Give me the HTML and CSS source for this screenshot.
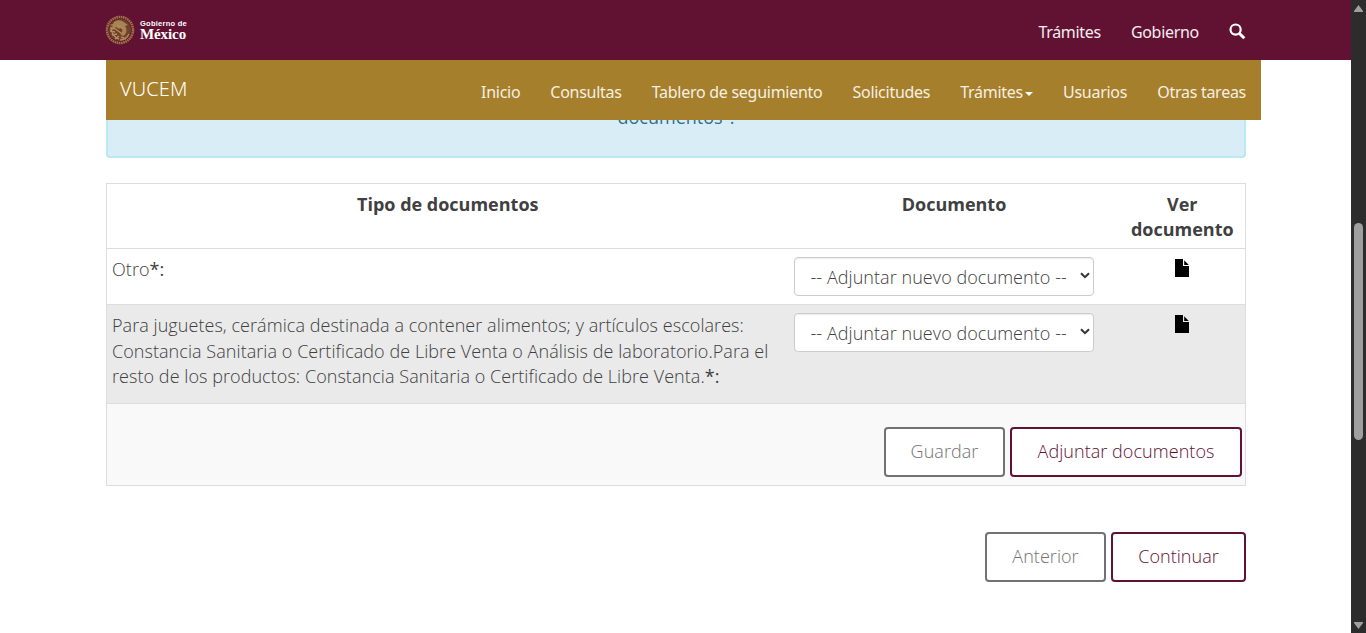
FILE: index.html
```html
<!DOCTYPE html>
<html lang="es">
<head>
<meta charset="utf-8">
<title>VUCEM</title>
<link rel="stylesheet" href="styles.css">
</head>
<body>
<div class="window">
  <div class="page">
    <header class="gov-bar">
      <div class="gov-inner">
        <a class="gov-logo">
          <svg class="seal" viewBox="0 0 30 30" width="30" height="30">
            <circle cx="15" cy="15" r="13" fill="none" stroke="#9c7447" stroke-width="2.6" stroke-dasharray="1.6 .6"/>
            <circle cx="15" cy="15" r="11" fill="#70402f"/>
            <path d="M9 7c4-3 8-2 11 1l3 2-3 1c3 4 1 9-2 10l-3-2c3-2 3-5 1-7l-2 2-3-2-3 3-3-1 3-3-4-1 4-1z" fill="#a98351"/>
            <path d="M6 12c0 6 3 10 8 12M5 16l5 1M7 20l5-1M10 24l4-3M15 25c4 0 7-2 9-6M16 22l5 2M12 10l6 4M9 13l7 5" fill="none" stroke="#b38e5d" stroke-width="1.4"/>
          </svg>
          <span class="gov-name"><small>Gobierno de</small><strong>México</strong></span>
        </a>
        <nav class="gov-links">
          <a>Trámites</a><a>Gobierno</a>
          <svg class="search" viewBox="0 0 17 17" width="17" height="17"><circle cx="6.6" cy="6.6" r="5.1" fill="none" stroke="#fff" stroke-width="2.2"/><path d="M10.5 10.5L15.3 15.3" stroke="#fff" stroke-width="3"/></svg>
        </nav>
      </div>
    </header>
    <div class="site-bar">
      <a class="brand">VUCEM</a>
      <nav class="menu">
        <a>Inicio</a><a>Consultas</a><a>Tablero de seguimiento</a><a>Solicitudes</a><a>Trámites<i class="caret"></i></a><a>Usuarios</a><a>Otras tareas</a>
      </nav>
    </div>
    <main class="content">
      <div class="alert">documentos".</div>
      <table class="docs">
        <colgroup><col class="col-type"><col class="col-doc"><col class="col-view"></colgroup>
        <thead><tr><th>Tipo de documentos</th><th>Documento</th><th>Ver documento</th></tr></thead>
        <tbody>
          <tr class="row-short">
            <td>Otro<b>*:</b></td>
            <td><div class="select"><span>-- Adjuntar nuevo documento --</span><svg viewBox="0 0 10 7" width="10" height="7"><path d="M1 1.2L5 5.2L9 1.2" fill="none" stroke="#333" stroke-width="2"/></svg></div></td>
            <td class="view"><svg viewBox="0 0 14 18" width="14" height="18"><path d="M0 0H8V7H14V18H0zM9.2 1.2L13.8 6H9.2z"/></svg></td>
          </tr>
          <tr class="row-long">
            <td>Para juguetes, cerámica destinada a contener alimentos; y artículos escolares:<br>Constancia Sanitaria o Certificado de Libre Venta o Análisis de laboratorio.Para el<br>resto de los productos: Constancia Sanitaria o Certificado de Libre Venta.<b>*:</b></td>
            <td><div class="select"><span>-- Adjuntar nuevo documento --</span><svg viewBox="0 0 10 7" width="10" height="7"><path d="M1 1.2L5 5.2L9 1.2" fill="none" stroke="#333" stroke-width="2"/></svg></div></td>
            <td class="view"><svg viewBox="0 0 14 18" width="14" height="18"><path d="M0 0H8V7H14V18H0zM9.2 1.2L13.8 6H9.2z"/></svg></td>
          </tr>
        </tbody>
        <tfoot><tr><td colspan="3"><div class="actions"><button class="btn btn-muted">Guardar</button><button class="btn btn-attach">Adjuntar documentos</button></div></td></tr></tfoot>
      </table>
      <div class="actions pager"><button class="btn btn-muted">Anterior</button><button class="btn btn-next">Continuar</button></div>
    </main>
  </div>
  <div class="scrollbar">
    <svg viewBox="0 0 9 7" width="9" height="7"><path d="M4.5 0L9 6V7H0V6z" fill="#9f9f9f"/></svg>
    <div class="thumb"></div>
    <svg viewBox="0 0 9 7" width="9" height="7"><path d="M4.5 7L9 1V0H0V1z" fill="#9f9f9f"/></svg>
  </div>
</div>
</body>
</html>
```
FILE: styles.css
```css
* { box-sizing: border-box; }
body { margin: 0; background: #fff; color: #404041; font: 300 18px/25.7px "Open Sans", "Noto Sans", sans-serif; }
.window { display: flex; height: 633px; overflow: hidden; }
.page { flex: 1; }
.gov-bar { height: 60px; background: #611232; }
.gov-inner { width: 1140px; height: 60px; margin-left: 106px; display: flex; justify-content: space-between; }
.gov-logo { display: flex; align-items: center; gap: 4px; color: #fff; padding-bottom: 1px; }
.seal { display: block; margin-left: -1px; }
.gov-name { display: flex; flex-direction: column; padding-left: 1px; }
.gov-name small { font: 700 7.5px/9px "Liberation Sans", sans-serif; letter-spacing: .25px; }
.gov-name strong { font: 700 15px/13px "Liberation Serif", serif; letter-spacing: -.1px; }
.gov-links, .menu { display: flex; gap: 30px; font: 400 16px/24px "Noto Sans", sans-serif; letter-spacing: -.3px; white-space: nowrap; }
.gov-links { color: #f5ecef; padding-top: 20px; }
.search { margin-top: 3px; }
.site-bar { position: relative; z-index: 2; width: 1155px; height: 60px; margin-left: 106px; padding: 0 15px 0 14px; display: flex; justify-content: space-between; background: #a57f2c; color: #f6efe2; }
.brand { padding-top: 16px; font: 300 20px/26px "Noto Sans", sans-serif; letter-spacing: .1px; color: #fff; }
.menu { padding-top: 20px; letter-spacing: -.27px; }
.caret { display: inline-block; margin-left: 2px; vertical-align: 2px; border: 4px solid transparent; border-top-color: #fff; border-bottom: 0; }
.content { width: 1140px; margin-left: 106px; }
.alert { height: 58px; margin: -20px 0 25px; padding-top: 5px; border: 2px solid #bce8f1; border-top: 0; border-radius: 0 0 4px 4px; background: #d9edf7; color: #31708f; font-weight: 400; text-align: center; }
.docs { width: 1140px; border-collapse: collapse; table-layout: fixed; border: 1px solid #ddd; }
.col-type { width: 682px; }
.col-doc { width: 331px; }
.docs th, .docs td { padding: 8px 5px; vertical-align: top; border-top: 1px solid #ddd; }
.docs th { height: 65px; padding-bottom: 6px; font-weight: 700; line-height: 25px; }
.docs tbody td { letter-spacing: .055px; }
.docs b { font-weight: 500; }
.row-short { height: 56px; }
.row-long { height: 99px; background: #eaeaea; }
.docs tfoot tr { height: 82px; background: #f9f9f9; }
.docs tfoot td { padding: 23px 3px 8px; }
.select { display: flex; align-items: center; justify-content: space-between; width: 300px; height: 39px; padding: 0 3px 0 16px; border: 1px solid #ccc; border-radius: 4px; background: #fff; color: #404041; box-shadow: inset 0 1px 1px rgba(0, 0, 0, .075); }
.select span { width: 255px; padding-top: 2px; overflow: hidden; white-space: nowrap; }
.select svg { margin-bottom: 2px; }
.docs .view { text-align: center; padding-top: 10px; }
.view svg { display: block; margin: 0 auto; }
.actions { display: flex; justify-content: flex-end; gap: 5px; }
.pager { margin-top: 46px; }
.btn { width: 121px; height: 50px; padding: 0; border: 2px solid #611232; border-radius: 4px; background: #fff; color: #611232; font: inherit; letter-spacing: .05px; }
.btn-muted { border-color: #727272; color: #727272; }
.btn-attach { width: 232px; }
.btn-next { width: 135px; }
.scrollbar { width: 15px; height: 633px; padding: 5px 0 4px; display: flex; flex-direction: column; align-items: center; background: #2c2c2c; }
.thumb { width: 9px; height: 217px; margin: 211px 0 auto; border-radius: 5px; background: #9f9f9f; }
```
